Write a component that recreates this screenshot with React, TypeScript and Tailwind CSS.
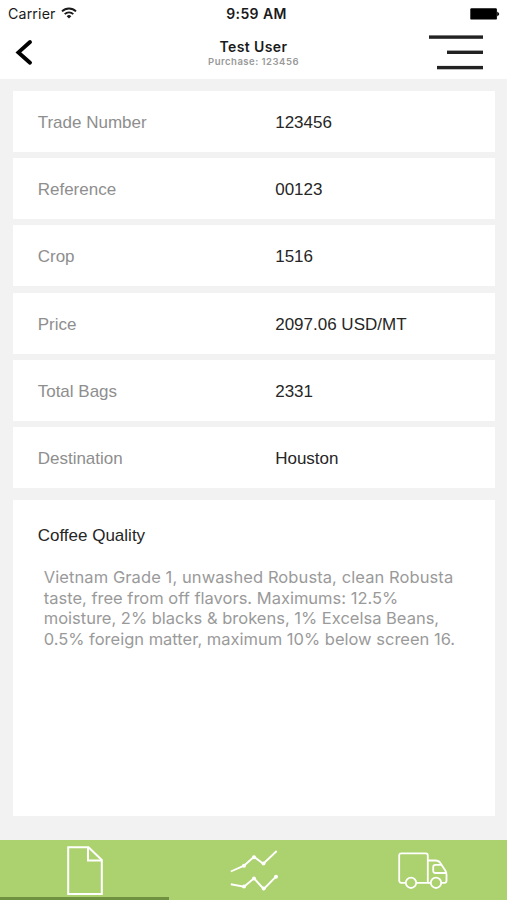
type TradeField = {
  label: string
  value: string
}

const fields: TradeField[] = [
  { label: 'Trade Number', value: '123456' },
  { label: 'Reference', value: '00123' },
  { label: 'Crop', value: '1516' },
  { label: 'Price', value: '2097.06 USD/MT' },
  { label: 'Total Bags', value: '2331' },
  { label: 'Destination', value: 'Houston' },
]

function WifiIcon() {
  return (
    <svg className="h-3 w-4" viewBox="0 0 16 12" fill="none" stroke="#1a1a1a" strokeWidth="1.9">
      <path d="M1 4.4a10 10 0 0 1 14 0" />
      <path d="M3.7 7.1a6.1 6.1 0 0 1 8.6 0" />
      <path d="M8 11.6 5.7 9.2a3.3 3.3 0 0 1 4.6 0Z" fill="#1a1a1a" stroke="none" />
    </svg>
  )
}

function BatteryIcon() {
  return (
    <svg className="h-3 w-[30px]" viewBox="0 0 30 12">
      <rect x="0.3" y="0.2" width="26.6" height="11.4" rx="1.2" fill="#000" />
      <path d="M27.6 4.2a2 2 0 0 1 0 3.6Z" fill="#000" stroke="#000" strokeWidth="0.8" />
    </svg>
  )
}

function StatusBar() {
  return (
    <div className="grid h-[27px] grid-cols-3 items-center pr-[7px] pl-2 text-[#1a1a1a]">
      <div className="flex items-center gap-[5px]">
        <span className="text-[14.2px] tracking-[0.15px]">Carrier</span>
        <WifiIcon />
      </div>
      <span className="pb-px pl-[5px] text-center text-[14px] font-semibold tracking-[0.4px] whitespace-nowrap">
        9:59 AM
      </span>
      <div className="flex justify-end">
        <BatteryIcon />
      </div>
    </div>
  )
}

function NavBar() {
  return (
    <div className="grid h-[52px] grid-cols-[1fr_auto_1fr] items-start">
      <button type="button" aria-label="Back" className="mt-3 ml-[15px] w-[18px]">
        <svg className="h-[27px] w-[18px]" viewBox="0 0 18 27" fill="none" stroke="#000" strokeWidth="3.9">
          <path d="M15 3 3.4 13.4 15 23.8" strokeLinejoin="miter" strokeLinecap="round" />
        </svg>
      </button>
      <div className="pt-[11px] text-center">
        <h1 className="text-[14px] leading-[18px] font-semibold tracking-[0.4px] text-[#1a1a1a]">Test User</h1>
        <p className="text-[9.5px] leading-[11px] font-semibold tracking-[0.5px] text-[#999]">
          Purchase: 123456
        </p>
      </div>
      <button type="button" aria-label="Menu" className="mt-2 mr-[24px] justify-self-end">
        <svg className="h-9 w-[54px]" viewBox="0 0 54 36" fill="#222">
          <rect x="0" y="0.4" width="54" height="3.4" />
          <rect x="18" y="15.6" width="36" height="3.4" />
          <rect x="8" y="30.9" width="46" height="3.4" />
        </svg>
      </button>
    </div>
  )
}

function FieldRow({ label, value }: TradeField) {
  return (
    <div className="flex h-[61px] items-center bg-white pt-[2.4px] pl-[25px] font-['Liberation_Sans',sans-serif] text-[17px]">
      <dt className="w-[237.5px] text-[#8e8e8e]">{label}</dt>
      <dd className="text-[#262626]">{value}</dd>
    </div>
  )
}

function DocumentIcon() {
  return (
    <svg className="h-[50px] w-9" viewBox="0 0 36 50" fill="none" stroke="#fff" strokeWidth="2">
      <path d="M1.2 1.2h20.3L34.8 14v34H1.2Z" />
      <path d="M21 1.2V14.6h13.8" />
    </svg>
  )
}

function ChartIcon() {
  return (
    <svg className="h-[42px] w-12" viewBox="0 0 48 42" fill="none" stroke="#fff" strokeWidth="1.9">
      <path d="M.8 21.5 14 15.7 24 6.7 33.3 13.7 46.7 1" />
      <path d="M.8 34.3 14 36.7 24 28.3 33.7 39 46 26.7" />
      <g fill="#fff" stroke="none">
        <circle cx="14" cy="15.7" r="2" />
        <circle cx="24" cy="7.2" r="2" />
        <circle cx="33.5" cy="13.5" r="2" />
        <circle cx="14" cy="36.6" r="2" />
        <circle cx="24" cy="28.6" r="2" />
        <circle cx="33.7" cy="38.5" r="2" />
        <circle cx="46" cy="26.8" r="2" />
      </g>
    </svg>
  )
}

function TruckIcon() {
  return (
    <svg className="h-[38px] w-[50px]" viewBox="0 0 50 38" fill="none" stroke="#fff" strokeWidth="1.8">
      <path d="M7.5 30.8H3.2a2 2 0 0 1-2-2V3.4a2 2 0 0 1 2-2h24.6a2 2 0 0 1 2 2v27.4H18.5" />
      <path d="M29.8 8.5h7.6c2.2 0 3.8.7 4.9 2.4l5 7.5c.9 1.4 1.2 2.4 1.2 4v6.4a2 2 0 0 1-2 2h-3M29.8 30.8h3" />
      <path d="M43 12.9h-5.6a2.2 2.2 0 0 0-2.2 2.2v3.7a2.2 2.2 0 0 0 2.2 2.2h11" />
      <circle cx="13" cy="30.8" r="5.2" />
      <circle cx="38" cy="30.8" r="5.2" />
    </svg>
  )
}

function TabBar() {
  return (
    <nav className="h-[60px] bg-[#acd16f]">
      <div className="grid h-[56.5px] grid-cols-3">
        <button type="button" aria-label="Details" className="flex justify-center pt-[6px]">
          <DocumentIcon />
        </button>
        <button type="button" aria-label="Prices" className="flex justify-center pt-[10px]">
          <ChartIcon />
        </button>
        <button type="button" aria-label="Shipping" className="flex justify-center pt-3">
          <TruckIcon />
        </button>
      </div>
      {/* Selected tab marker */}
      <div className="h-[3.5px] w-1/3 bg-[#6f9140]" />
    </nav>
  )
}

export default function App() {
  return (
    <div className="flex h-[900px] w-[507px] flex-col overflow-hidden bg-[#f2f2f2] font-['Inter',sans-serif]">
      <header className="h-[79px] bg-white">
        <StatusBar />
        <NavBar />
      </header>

      <main className="flex flex-1 flex-col pt-3 pr-3 pb-6 pl-[12.7px]">
        <dl className="flex flex-col gap-[6.2px]">
          {fields.map((field) => (
            <FieldRow key={field.label} {...field} />
          ))}
        </dl>

        <section className="mt-[12.5px] flex-1 bg-white pt-[26px] pl-[25px]">
          <h2 className="font-['Liberation_Sans',sans-serif] text-[17px] leading-5 text-[#262626]">
            Coffee Quality
          </h2>
          <p className="mt-[20.8px] ml-[6px] text-[16.5px] leading-[20.6px] whitespace-nowrap text-[#9a9a9a]">
            <span className="tracking-[0.09px]">Vietnam Grade 1, unwashed Robusta, clean Robusta</span>
            <br />
            taste, free from off flavors. Maximums: 12.5%
            <br />
            moisture, 2% blacks &amp; brokens, 1% Excelsa Beans,
            <br />
            0.5% foreign matter, maximum 10% below screen 16.
          </p>
        </section>
      </main>

      <TabBar />
    </div>
  )
}
